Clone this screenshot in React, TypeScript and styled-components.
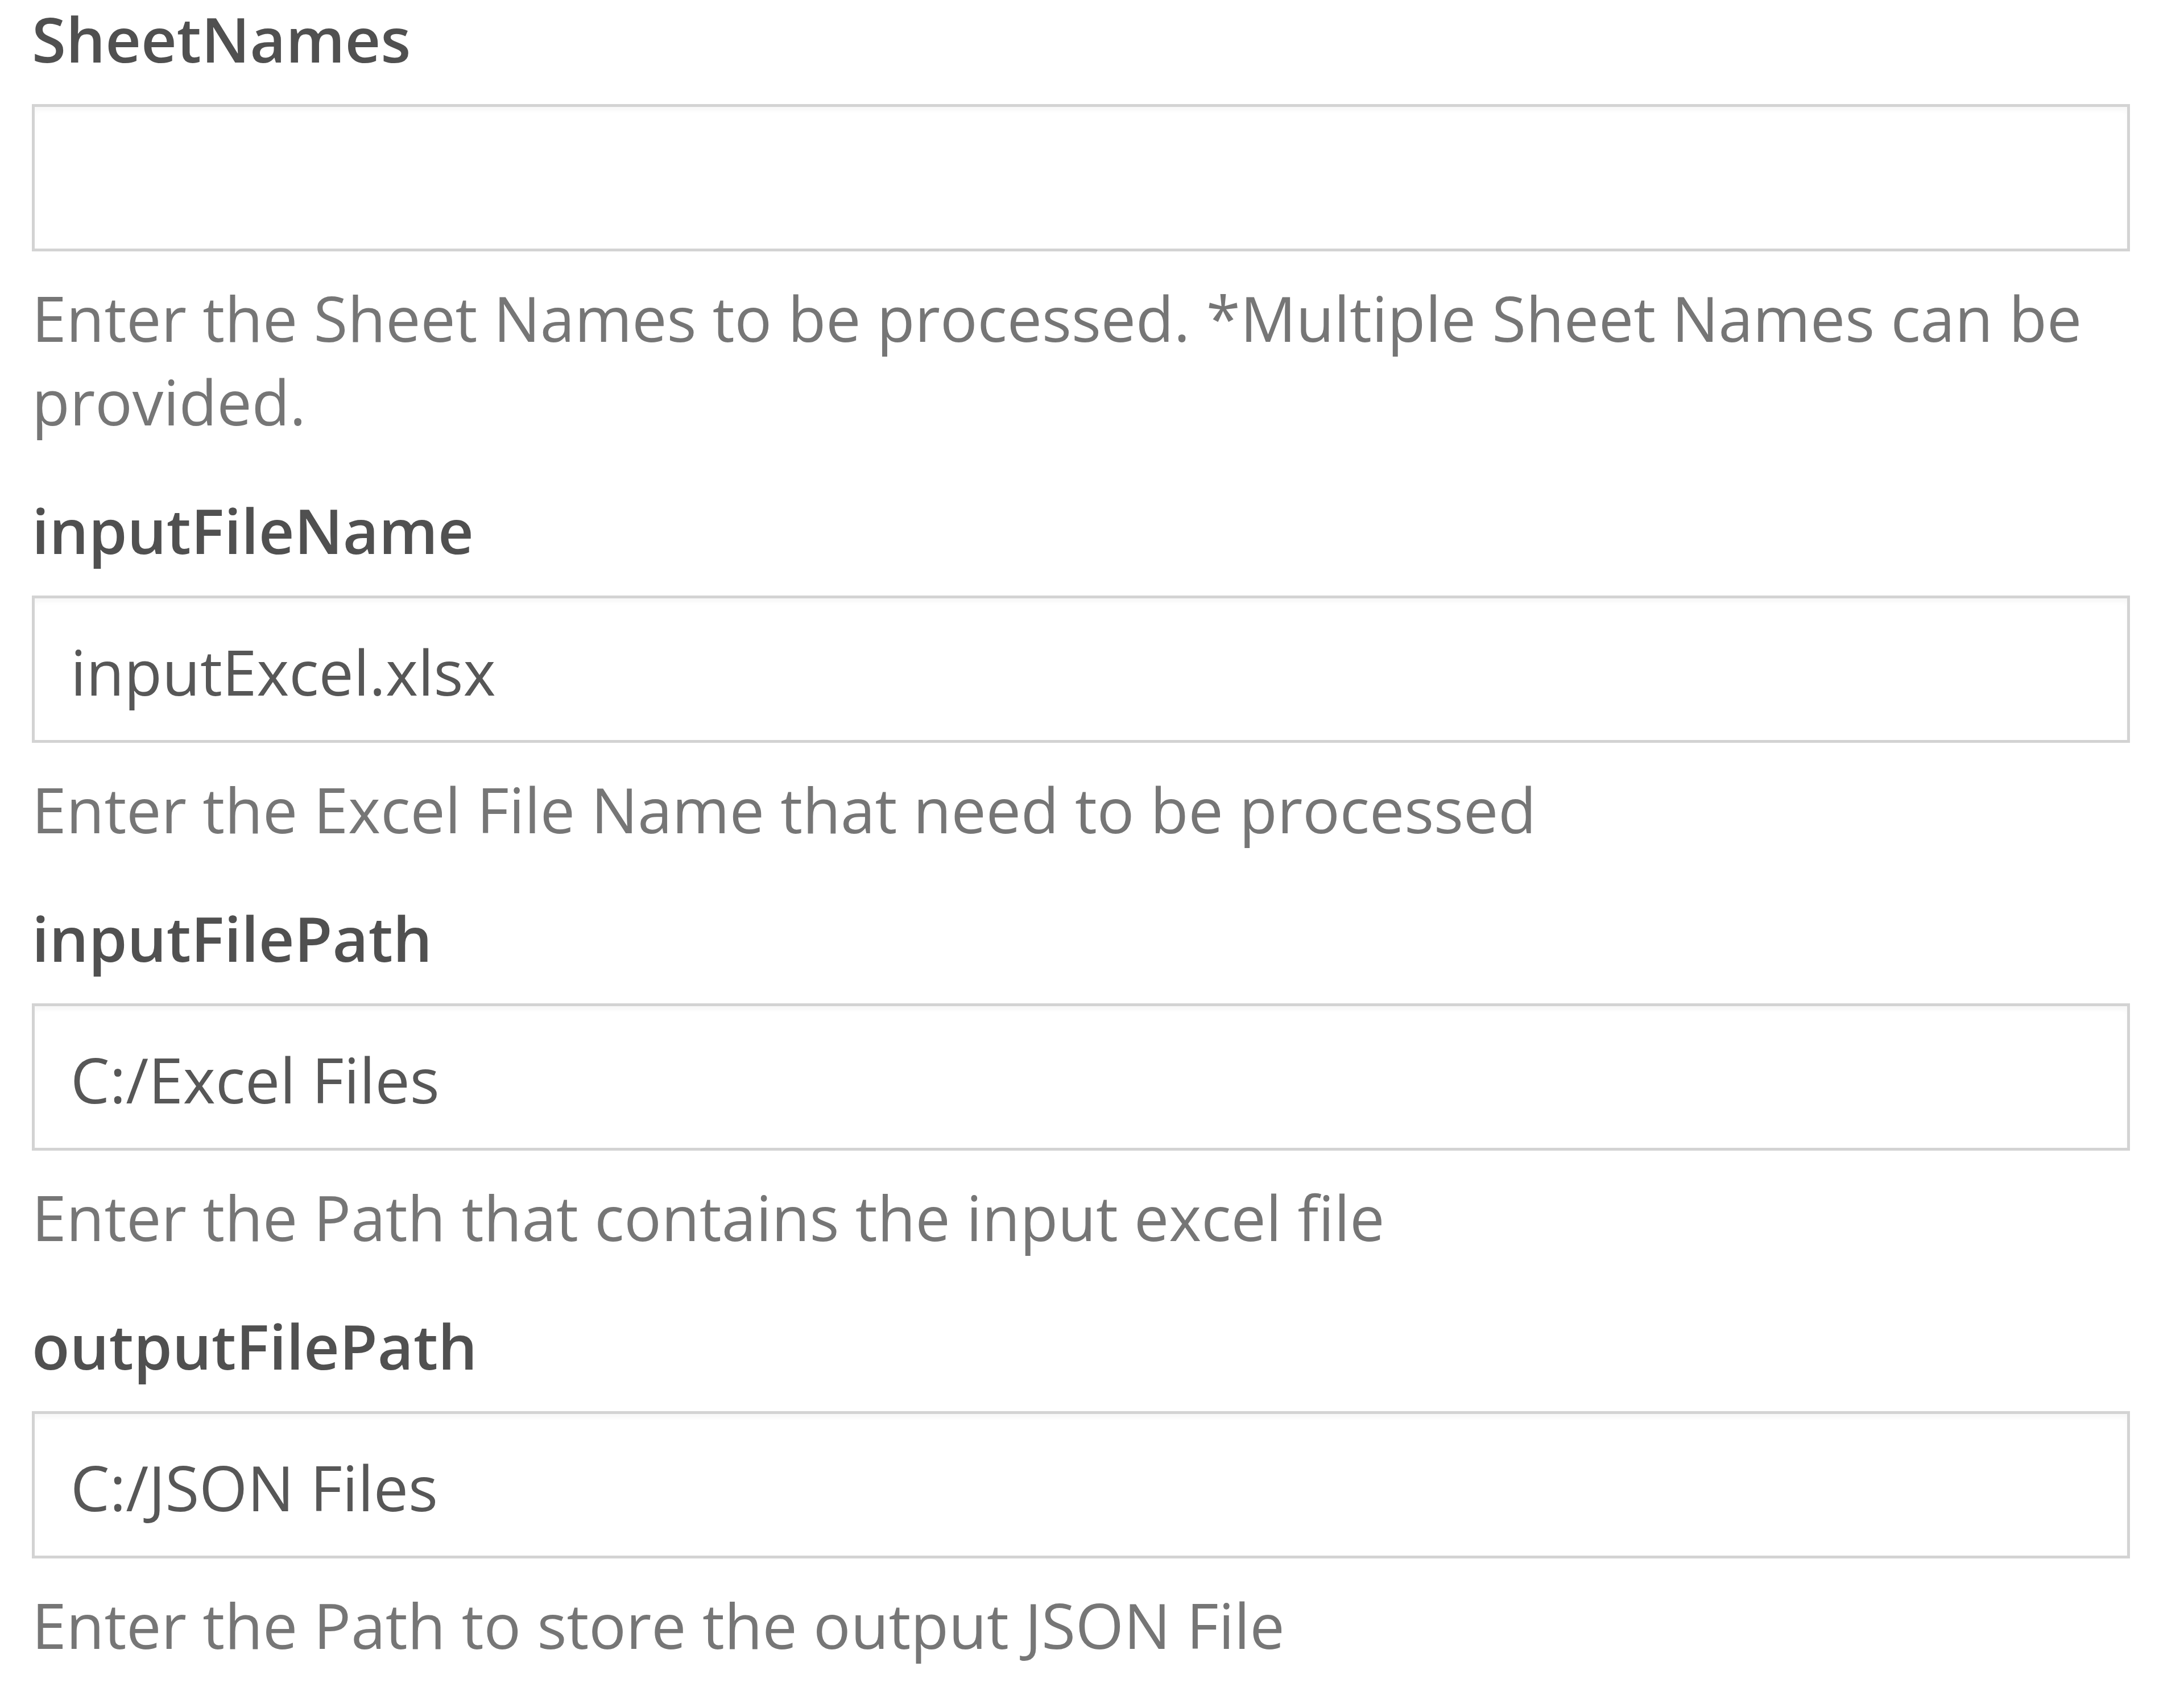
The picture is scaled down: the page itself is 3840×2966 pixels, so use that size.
import React from 'react';
import styled, { createGlobalStyle } from 'styled-components';

const GlobalStyle = createGlobalStyle`
    html, body {
        margin: 0;
        padding: 0;
        background: #ffffff;
    }
    body {
        font-family: "Open Sans", "Liberation Sans", sans-serif;
    }
`;

const fields = [
    {
        name: 'SheetNames',
        value: '',
        help: 'Enter the Sheet Names to be processed. *Multiple Sheet Names can be provided.',
    },
    {
        name: 'inputFileName',
        value: 'inputExcel.xlsx',
        help: 'Enter the Excel File Name that need to be processed',
    },
    {
        name: 'inputFilePath',
        value: 'C:/Excel Files',
        help: 'Enter the Path that contains the input excel file',
    },
    {
        name: 'outputFilePath',
        value: 'C:/JSON Files',
        help: 'Enter the Path to store the output JSON File',
    },
];

function ConfigForm() {
    return (
        <CssStyle>
            {fields.map((f) => (
                <Field key={f.name}>
                    <Label htmlFor={f.name}>{f.name}</Label>
                    <Input id={f.name} type="text" defaultValue={f.value} readOnly />
                    <Help>{f.help}</Help>
                </Field>
            ))}
        </CssStyle>
    );
}

export default function App() {
    return (
        <>
            <GlobalStyle />
            <ConfigForm />
        </>
    );
}

const CssStyle = styled.form`
    display: flex;
    flex-direction: column;
    gap: 85px;
    margin: 0 95px 0 56px;
    font-family: "Open Sans", "Liberation Sans", sans-serif;
    font-size: 109px;
    line-height: 147px;
`;

const Field = styled.div`
    display: flex;
    flex-direction: column;
`;

const Label = styled.label`
    display: block;
    margin-bottom: 48px;
    line-height: 135px;
    font-weight: 600;
    color: #505050;
`;

const Input = styled.input`
    box-sizing: border-box;
    width: 100%;
    height: 259px;
    margin: 0;
    padding: 8px 63px 0;
    border: 5px solid #d3d3d3;
    border-radius: 0;
    background: #ffffff;
    box-shadow: inset 0 7px 7px rgba(0, 0, 0, 0.03);
    font-family: "Open Sans", "Liberation Sans", sans-serif;
    font-size: 109px;
    color: #575757;
    outline: none;
`;

const Help = styled.p`
    margin: 43px 0 0;
    color: #767676;
`;
